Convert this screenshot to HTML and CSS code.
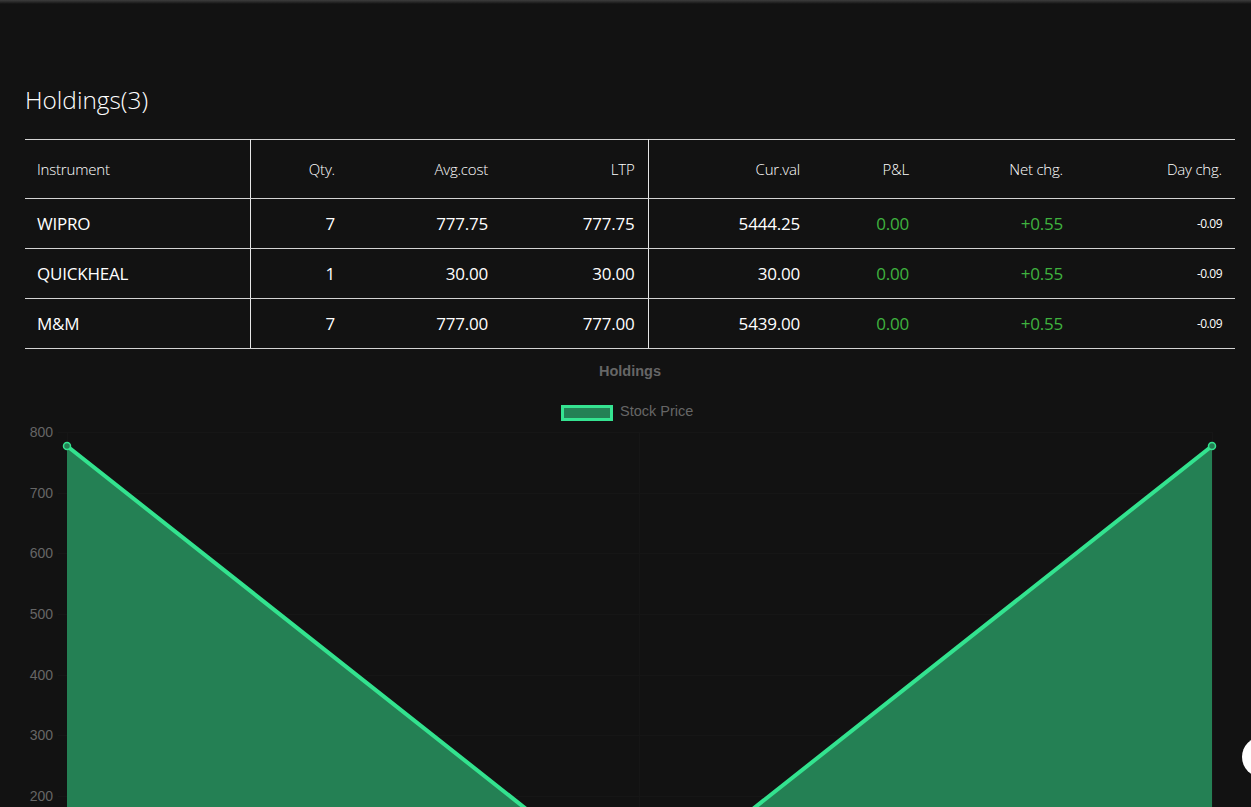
FILE: index.html
```html
<!DOCTYPE html>
<html lang="en">
<head>
<meta charset="utf-8">
<title>Holdings</title>
<link rel="stylesheet" href="styles.css">
</head>
<body>
<div class="topbar"></div>
<main class="page">
  <h1 class="title">Holdings(3)</h1>
  <table class="holdings">
    <colgroup>
      <col class="c1"><col class="c2"><col class="c3"><col class="c4">
      <col class="c5"><col class="c6"><col class="c7"><col class="c8">
    </colgroup>
    <thead>
      <tr>
        <th class="left sep">Instrument</th>
        <th>Qty.</th>
        <th>Avg.cost</th>
        <th class="sep">LTP</th>
        <th>Cur.val</th>
        <th>P&amp;L</th>
        <th>Net chg.</th>
        <th>Day chg.</th>
      </tr>
    </thead>
    <tbody>
      <tr>
        <td class="left sep">WIPRO</td>
        <td>7</td>
        <td>777.75</td>
        <td class="sep">777.75</td>
        <td>5444.25</td>
        <td class="pos">0.00</td>
        <td class="pos">+0.55</td>
        <td class="small">-0.09</td>
      </tr>
      <tr>
        <td class="left sep">QUICKHEAL</td>
        <td>1</td>
        <td>30.00</td>
        <td class="sep">30.00</td>
        <td>30.00</td>
        <td class="pos">0.00</td>
        <td class="pos">+0.55</td>
        <td class="small">-0.09</td>
      </tr>
      <tr>
        <td class="left sep">M&amp;M</td>
        <td>7</td>
        <td>777.00</td>
        <td class="sep">777.00</td>
        <td>5439.00</td>
        <td class="pos">0.00</td>
        <td class="pos">+0.55</td>
        <td class="small">-0.09</td>
      </tr>
    </tbody>
  </table>

  <div class="chart">
    <svg class="chart-svg" width="1210" height="620" viewBox="0 0 1210 620">
      <text class="chart-title" x="605" y="27" text-anchor="middle">Holdings</text>
      <rect class="legend-box" x="537.5" y="57.5" width="49" height="13"/>
      <text class="legend-text" x="595" y="67">Stock Price</text>

      <g class="grid">
        <line x1="33" y1="83.5" x2="1187" y2="83.5"/>
        <line x1="33" y1="144.5" x2="1187" y2="144.5"/>
        <line x1="33" y1="204.5" x2="1187" y2="204.5"/>
        <line x1="33" y1="265.5" x2="1187" y2="265.5"/>
        <line x1="33" y1="326.5" x2="1187" y2="326.5"/>
        <line x1="33" y1="386.5" x2="1187" y2="386.5"/>
        <line x1="33" y1="447.5" x2="1187" y2="447.5"/>
        <line x1="33" y1="508.5" x2="1187" y2="508.5"/>
        <line x1="42.5" y1="83" x2="42.5" y2="580"/>
        <line x1="614.5" y1="83" x2="614.5" y2="580"/>
        <line x1="1187.5" y1="83" x2="1187.5" y2="580"/>
      </g>

      <g class="ylabels">
        <text x="28" y="88">800</text>
        <text x="28" y="149">700</text>
        <text x="28" y="209">600</text>
        <text x="28" y="270">500</text>
        <text x="28" y="331">400</text>
        <text x="28" y="391">300</text>
        <text x="28" y="452">200</text>
        <text x="28" y="513">100</text>
        <text x="28" y="573">0</text>
      </g>

      <polygon class="area" points="42,97 614.5,549.6 1187,97 1187,568 42,568"/>
      <polyline class="line" points="42,97 614.5,549.6 1187,97"/>
      <circle class="pt" cx="42" cy="97" r="3.5"/>
      <circle class="pt" cx="614.5" cy="549.6" r="3.5"/>
      <circle class="pt" cx="1187" cy="97" r="3.5"/>
    </svg>
  </div>
</main>
<div class="fab"></div>
</body>
</html>
```

FILE: styles.css
```css
html, body {
  margin: 0;
  padding: 0;
  background: #121212;
}

body {
  color: #ffffff;
  font-family: "Open Sans", "Noto Sans", "Liberation Sans", sans-serif;
}

.topbar {
  height: 4px;
  background: linear-gradient(to bottom, #3d3d3d, #121212);
}

.page {
  padding: 0 16px 0 25px;
}

.title {
  margin: 80px 0 0 0;
  font-size: 24.4px;
  font-weight: 300;
  line-height: 32px;
  letter-spacing: 0;
  color: #ffffff;
}

.holdings {
  margin-top: 23px;
  width: 1210px;
  border-collapse: collapse;
  table-layout: fixed;
  border-top: 1px solid #d4d4d4;
}

.c1 { width: 225px; }
.c2 { width: 98px; }
.c3 { width: 153px; }
.c4 { width: 147px; }
.c5 { width: 165px; }
.c6 { width: 109px; }
.c7 { width: 154px; }
.c8 { width: 159px; }

.holdings th,
.holdings td {
  text-align: right;
  padding: 0 13px 0 12px;
  border-bottom: 1px solid #d4d4d4;
  white-space: nowrap;
}

.holdings th {
  height: 58px;
  font-size: 15px;
  font-weight: 300;
  letter-spacing: -0.2px;
  color: #ffffff;
}

.holdings td {
  height: 49px;
  font-size: 17px;
  font-weight: 400;
  letter-spacing: -0.2px;
  color: #ffffff;
}

.holdings .left {
  text-align: left;
}

.holdings .sep {
  border-right: 1px solid #e6e6e6;
}

.holdings td.pos {
  color: #3fb33f;
}

.holdings td.small {
  font-size: 12px;
  letter-spacing: -0.5px;
}

.chart {
  width: 1210px;
  height: 459px;
  overflow: hidden;
}

.chart-svg {
  display: block;
  font-family: "Liberation Sans", Arial, sans-serif;
}

.chart-title {
  font-size: 14.5px;
  font-weight: 700;
  fill: #666666;
}

.legend-text {
  font-size: 14.5px;
  fill: #666666;
}

.legend-box {
  fill: #248055;
  stroke: #35e391;
  stroke-width: 3;
}

.grid line {
  stroke: #161616;
  stroke-width: 1;
}

.ylabels text {
  font-size: 14px;
  fill: #666666;
  text-anchor: end;
}

.area {
  fill: #248054;
}

.line {
  fill: none;
  stroke: #33e38f;
  stroke-width: 4;
  stroke-linejoin: round;
}

.pt {
  fill: #248054;
  stroke: #33e38f;
  stroke-width: 1.5;
}

.fab {
  position: fixed;
  right: -31px;
  bottom: 30px;
  width: 40px;
  height: 40px;
  border-radius: 50%;
  background: #ffffff;
}
```
